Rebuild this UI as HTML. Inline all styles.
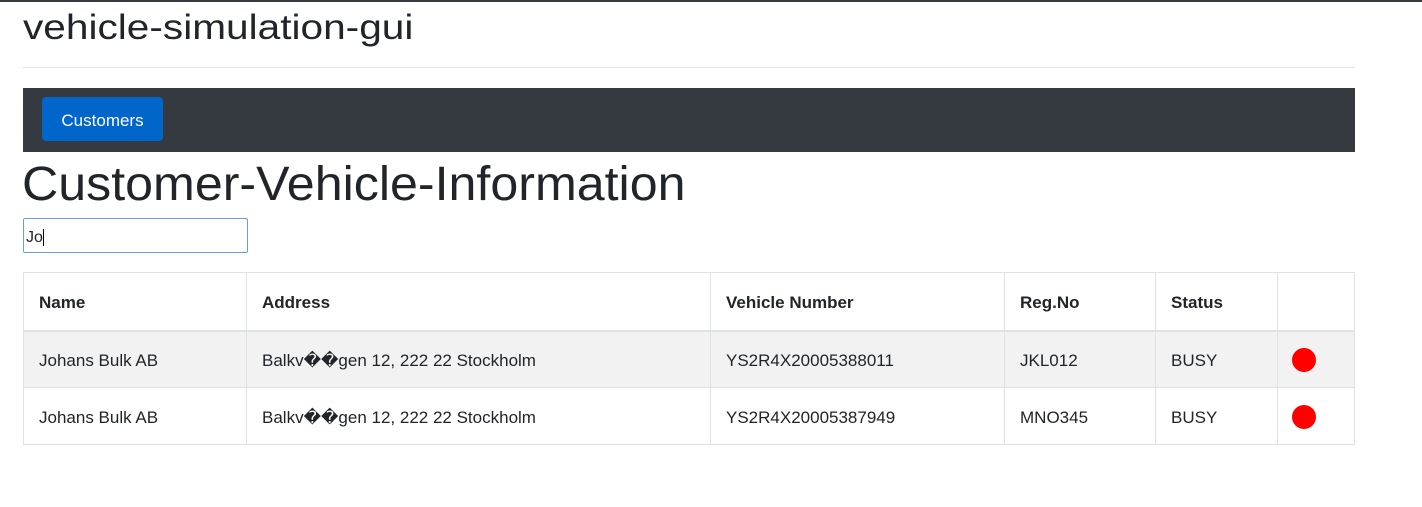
<!DOCTYPE html>
<html><head><meta charset="utf-8"><style>
*{box-sizing:border-box;margin:0;padding:0}
body{width:1422px;height:507px;background:#fff;font-family:"Liberation Sans","DejaVu Sans",sans-serif;color:#212529;position:relative;overflow:hidden}
.a{position:absolute}
h3{left:23px;top:8px;font-size:35px;font-weight:500;transform:scaleX(1.16);transform-origin:left}
.hr{left:23px;top:67px;width:1332px;height:1px;background:#e3e3e3}
.nav{left:23px;top:88px;width:1332px;height:64px;background:#343a40}
.btn{left:42px;top:97px;width:121px;height:44px;background:#0066cc;border-radius:4px;color:#fff;font-size:17px;line-height:48px;text-align:center}
h1{left:22px;top:157px;font-size:48px;font-weight:500;transform:scaleX(1.045);transform-origin:left}
.inp{left:23px;top:218px;width:225px;height:35px;border:1px solid #6b9be0;border-radius:2px;font-size:16px;line-height:37px;padding-left:2px}
table{position:absolute;left:23px;top:272px;width:1332px;border-collapse:collapse;font-size:17px}
td,th{border:1px solid #dee2e6;padding:3px 15px 0;text-align:left;height:57px}
th{font-weight:bold;height:58px;border-bottom:2px solid #dee2e6}
tr.s td{background:#f2f2f2}
.dot{width:24px;height:24px;border-radius:50%;background:#f00;margin-left:-1px;margin-top:-2px}
</style></head><body>
<div class="a" style="left:0;top:0;width:1422px;height:2px;background:#343a40"></div>
<h3 class="a">vehicle-simulation-gui</h3>
<div class="a hr"></div>
<div class="a nav"></div>
<div class="a btn">Customers</div>
<h1 class="a">Customer-Vehicle-Information</h1>
<div class="a inp">Jo<span style="border-left:1px solid #000"></span></div>
<table>
<tr><th style="width:223px">Name</th><th style="width:464px">Address</th><th style="width:294px">Vehicle Number</th><th style="width:151px">Reg.No</th><th style="width:122px">Status</th><th></th></tr>
<tr class="s"><td>Johans Bulk AB</td><td>Balkv��gen 12, 222 22 Stockholm</td><td>YS2R4X20005388011</td><td>JKL012</td><td>BUSY</td><td><div class="dot"></div></td></tr>
<tr><td>Johans Bulk AB</td><td>Balkv��gen 12, 222 22 Stockholm</td><td>YS2R4X20005387949</td><td>MNO345</td><td>BUSY</td><td><div class="dot"></div></td></tr>
</table>
</body></html>
